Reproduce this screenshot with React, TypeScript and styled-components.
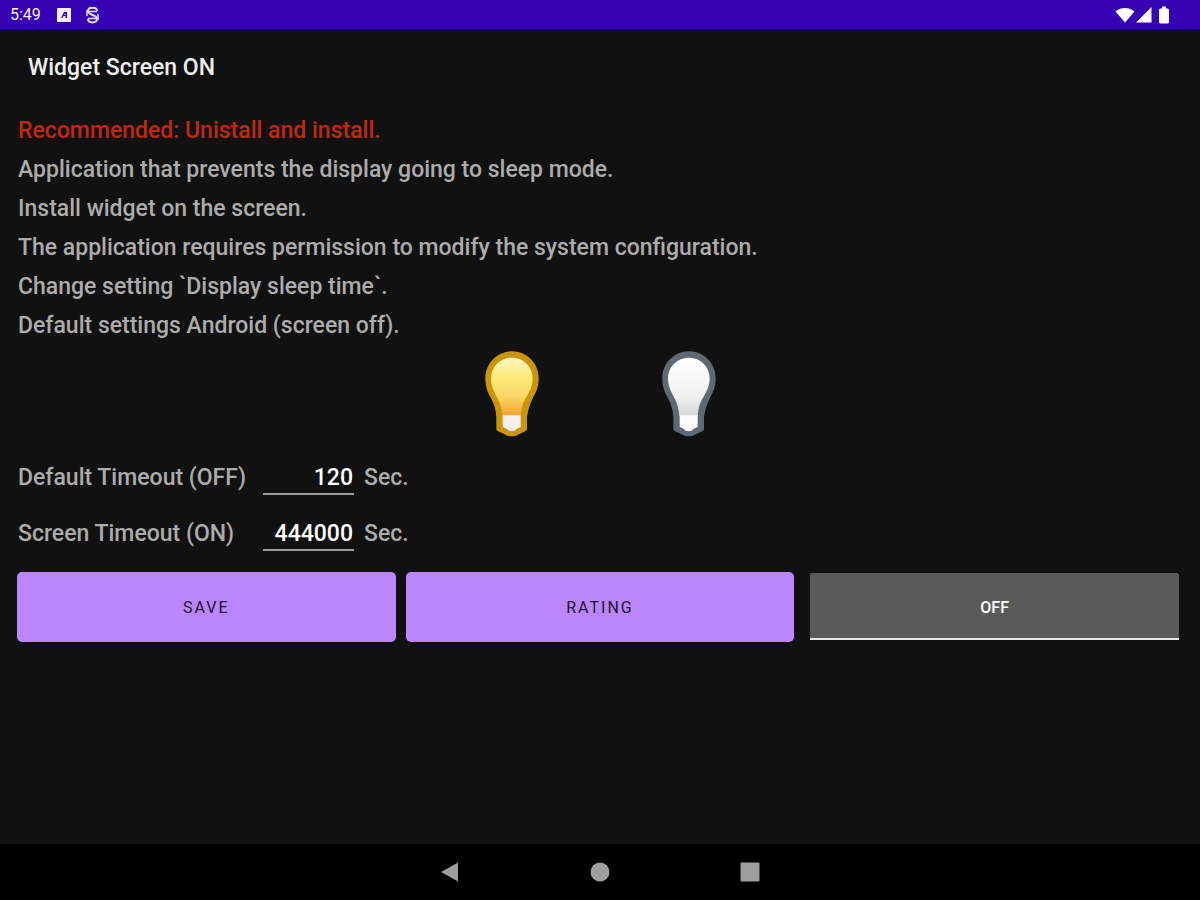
import React, { useState } from "react";
import styled, { createGlobalStyle } from "styled-components";

const GlobalStyle = createGlobalStyle`
  * { box-sizing: border-box; }
  body {
    margin: 0;
    background: #111111;
    font-family: Roboto, "Liberation Sans", sans-serif;
  }
`;

const Screen = styled.div`
  display: flex;
  flex-direction: column;
  min-height: 100vh;
  background: #111111;
  color: #acacac;
`;

const StatusBar = styled.header`
  display: flex;
  align-items: center;
  justify-content: space-between;
  height: 29px;
  padding: 0 31px 0 10px;
  background: #3700b3;
  color: #f4f0ff;
`;

const StatusGroup = styled.div<{ $gap: number }>`
  display: flex;
  align-items: center;
  gap: ${(p) => p.$gap}px;
`;

const Clock = styled.span`
  font-size: 16px;
  line-height: 28px;
`;

const Title = styled.h1`
  margin: 0;
  padding: 0 28px;
  font-size: 23px;
  font-weight: 500;
  line-height: 78px;
  color: #eeeeee;
`;

const Content = styled.main`
  flex: 1;
  padding: 4px 17px 0;
`;

const Line = styled.p<{ $warning?: boolean }>`
  margin: 0;
  padding-left: 1px;
  font-size: 23px;
  font-weight: 500;
  line-height: 39px;
  color: ${(p) => (p.$warning ? "#c02a0a" : "inherit")};
`;

const Bulbs = styled.div`
  display: flex;
  justify-content: center;
  gap: 123px;
  padding: 6px 0 9px;
`;

const BulbButton = styled.button`
  display: block;
  padding: 0;
  border: 0;
  background: none;
  cursor: pointer;
`;

const Field = styled.div`
  display: grid;
  grid-template-columns: 245px 91px auto;
  align-items: center;
  justify-content: start;
  height: 56px;
  padding-left: 1px;
  font-size: 23px;
  font-weight: 500;
`;

const Seconds = styled.span`
  padding-left: 10px;
`;

const NumberInput = styled.input`
  width: 100%;
  height: 36px;
  padding: 2px 1px 0 0;
  border: 0;
  border-bottom: 2px solid #9c9c9c;
  background: none;
  font: inherit;
  color: #ffffff;
  text-align: right;
  outline: none;
`;

const Actions = styled.div`
  display: grid;
  grid-template-columns: repeat(3, 1fr);
  align-items: start;
  padding-top: 11px;
`;

const ActionButton = styled.button<{ $end?: number }>`
  height: 70px;
  margin-right: ${(p) => p.$end ?? 0}px;
  border: 0;
  border-radius: 5px;
  background: #bb86fc;
  font-family: inherit;
  font-size: 16px;
  letter-spacing: 2px;
  color: #1c0f2b;
  cursor: pointer;
`;

const ToggleButton = styled.button`
  height: 67px;
  margin: 1px 4px 0 16px;
  padding-top: 4px;
  border: 0;
  border-bottom: 2px solid #e6e6e6;
  border-radius: 2px 2px 0 0;
  background: #5a5a5b;
  font-family: inherit;
  font-size: 16px;
  font-weight: 500;
  color: #ffffff;
  cursor: pointer;
`;

const NavBar = styled.nav`
  display: flex;
  align-items: center;
  justify-content: center;
  gap: 130px;
  height: 56px;
  background: #000000;
`;

const NavButton = styled.button`
  display: flex;
  padding: 0;
  border: 0;
  background: none;
  cursor: pointer;
`;

type BulbProps = { id: string; rim: string; stops: string[]; base: string };

function Bulb({ id, rim, stops, base }: BulbProps) {
  return (
    <svg width="54" height="86" viewBox="0 0 162 258" aria-hidden="true">
      <defs>
        <linearGradient id={id} x1="0" y1="0" x2="0" y2="1">
          {stops.map((c, i) => (
            <stop key={c} offset={i / (stops.length - 1)} stopColor={c} />
          ))}
        </linearGradient>
      </defs>
      <path
        d="M81 1C36 1 1 37 1 82c0 22 5 37 13 52 10 17 16 32 18 48l2 16v38c4 6 14 8 22 12 8 5 15 8 24 8s17-3 25-8c8-4 16-6 21-12v-38l3-16c3-16 9-31 18-48 9-15 14-30 14-52C161 37 126 1 81 1z"
        fill={rim}
      />
      <path
        d="M81 20C46 20 18 47 18 82c0 22 8 38 16 53 9 16 16 33 18 60h55c2-27 9-44 19-60 9-15 17-31 17-53C143 47 116 20 81 20z"
        fill={`url(#${id})`}
      />
      <path d="M53 193h54v35l-12 5-6 6-9 2-9-2-6-6-12-5z" fill={base} />
    </svg>
  );
}

export default function App() {
  const [offTime, setOffTime] = useState("120");
  const [onTime, setOnTime] = useState("444000");
  const [enabled, setEnabled] = useState(false);

  return (
    <Screen>
      <GlobalStyle />
      <StatusBar>
        <StatusGroup $gap={16}>
          <Clock>5:49</Clock>
          <StatusGroup $gap={14}>
            <svg width="14" height="14" viewBox="0 0 14 14" aria-hidden="true">
              <rect width="14" height="14" rx="1" fill="#f4f0ff" />
              <path d="M4 10l3-6h3v6H8.500V8H6.500L5.500 10z" fill="#3700b3" />
              <path d="M7 7l1.500-1.500V7z" fill="#f4f0ff" />
            </svg>
            <svg width="15" height="18" viewBox="0 0 15 18" fill="none" stroke="#e6dcff" strokeWidth="2" aria-hidden="true">
              <path d="M12 5C12 0.500 3 0.500 3 5c0 4.500 9 3.500 9 8 0 4.500-9 4.500-9 0" />
              <path d="M2 4v6M13 8v6M3 5.500h9M3 12.500h9" strokeWidth="1.500" />
            </svg>
          </StatusGroup>
        </StatusGroup>
        <StatusGroup $gap={1}>
          <svg width="20" height="16" viewBox="0 0 20 16" fill="#ffffff" aria-hidden="true">
            <path d="M10 1C6 1 3 2.500 0.500 4.500L10 15.500l9.500-11C17 2.500 14 1 10 1z" />
          </svg>
          <svg width="16" height="16" viewBox="0 0 16 16" fill="#ffffff" aria-hidden="true">
            <path d="M0 15.500L15.500 0v15.500z" />
          </svg>
          <svg width="16" height="18" viewBox="0 0 16 18" fill="#ffffff" aria-hidden="true">
            <path d="M9 0.500h4v2h1.500q1.500 0 1.500 1.500v12q0 1.500-1.500 1.500h-7q-1.500 0-1.500-1.500V4q0-1.500 1.500-1.500H9z" />
          </svg>
        </StatusGroup>
      </StatusBar>

      <Title>Widget Screen ON</Title>

      <Content>
        <Line $warning>Recommended: Unistall and install.</Line>
        <Line>Application that prevents the display going to sleep mode.</Line>
        <Line>Install widget on the screen.</Line>
        <Line>The application requires permission to modify the system configuration.</Line>
        <Line>Change setting `Display sleep time`.</Line>
        <Line>Default settings Android (screen off).</Line>

        <Bulbs>
          <BulbButton type="button" aria-label="Screen on" onClick={() => setEnabled(true)}>
            <Bulb id="lit" rim="#c8960c" stops={["#fff6c4", "#fde878", "#fbd766", "#f0a032"]} base="#f6efec" />
          </BulbButton>
          <BulbButton type="button" aria-label="Screen off" onClick={() => setEnabled(false)}>
            <Bulb id="unlit" rim="#606874" stops={["#ffffff", "#f8f8f9", "#f0f0f1", "#d6d6d7"]} base="#fbfbfb" />
          </BulbButton>
        </Bulbs>

        <Field>
          <label htmlFor="off-time">Default Timeout (OFF)</label>
          <NumberInput id="off-time" inputMode="numeric" value={offTime} onChange={(e) => setOffTime(e.target.value)} />
          <Seconds>Sec.</Seconds>
        </Field>
        <Field>
          <label htmlFor="on-time">Screen Timeout (ON)</label>
          <NumberInput id="on-time" inputMode="numeric" value={onTime} onChange={(e) => setOnTime(e.target.value)} />
          <Seconds>Sec.</Seconds>
        </Field>

        <Actions>
          <ActionButton type="button" $end={10}>SAVE</ActionButton>
          <ActionButton type="button">RATING</ActionButton>
          <ToggleButton type="button" aria-pressed={enabled} onClick={() => setEnabled(!enabled)}>
            {enabled ? "ON" : "OFF"}
          </ToggleButton>
        </Actions>
      </Content>

      <NavBar>
        <NavButton type="button" aria-label="Back">
          <svg width="20" height="20" viewBox="0 0 20 20" fill="#9e9e9e" aria-hidden="true">
            <path d="M18 0.500v19L1 10z" />
          </svg>
        </NavButton>
        <NavButton type="button" aria-label="Home">
          <svg width="20" height="20" viewBox="0 0 20 20" fill="#9e9e9e" aria-hidden="true">
            <circle cx="10" cy="10" r="9.500" />
          </svg>
        </NavButton>
        <NavButton type="button" aria-label="Recent apps">
          <svg width="20" height="20" viewBox="0 0 20 20" fill="#9e9e9e" aria-hidden="true">
            <rect x="0.500" y="0.500" width="19" height="19" rx="1" />
          </svg>
        </NavButton>
      </NavBar>
    </Screen>
  );
}
